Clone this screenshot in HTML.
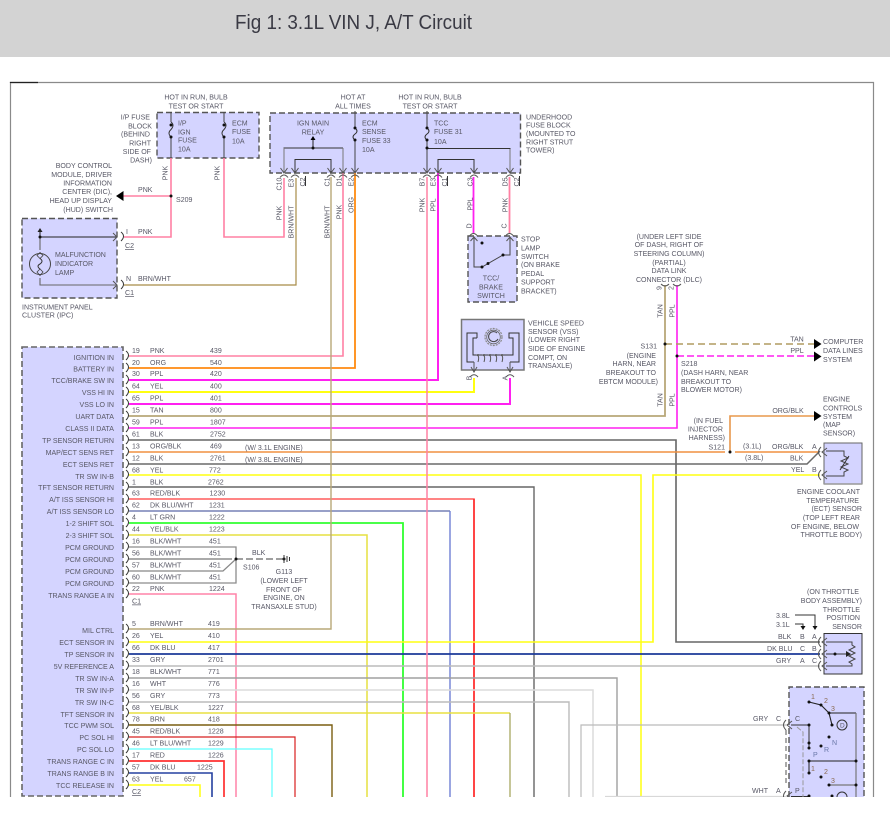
<!DOCTYPE html>
<html>
<head>
<meta charset="utf-8">
<title>Fig 1: 3.1L VIN J, A/T Circuit</title>
<style>
html,body{margin:0;padding:0;background:#fff;width:890px;height:817px;overflow:hidden}
svg{position:absolute;left:0;top:0;display:block}
text{font-family:"Liberation Sans",sans-serif;font-size:7.05px;fill:#585866}
.e{text-anchor:end}
.m{text-anchor:middle}
.u{text-decoration:underline}
.w path,.w circle{fill:none}
</style>
</head>
<body>
<svg width="890" height="797" viewBox="0 0 890 797" xmlns="http://www.w3.org/2000/svg">
<defs>
<path id="ca" d="M-4 4.5Q0 -.5 4 4.5M-3.5 -5L0 0L3.5 -5" fill="none" stroke="#555" stroke-width="1"/>
<path id="cp" d="M-2 -5Q3 -1 -2 4" fill="none" stroke="#333" stroke-width="1"/>
<path id="cl" d="M2 -5Q-3 0 2 5M8 -4L3 0L8 4" fill="none" stroke="#555" stroke-width="1"/>
<path id="ar" d="M-3 -5L0 0L3 -5" fill="none" stroke="#555" stroke-width="1"/>
<path id="tri" d="M0 -5L7.5 0L0 5Z" fill="#000"/>
<circle id="d" r="1.5" fill="#111"/>
</defs>

<!-- header -->
<rect x="0" y="0" width="890" height="57" fill="#d3d3d3"/>
<text x="235" y="29" textLength="237" lengthAdjust="spacingAndGlyphs" style="font-size:20.5px;fill:#3a3a44">Fig 1: 3.1L VIN J, A/T Circuit</text>

<!-- frame -->
<path d="M10.5 797V82.5H873.5V797" fill="none" stroke="#8a8a8a" stroke-width="1.2"/>
<path d="M10.5 83V82.5H38" fill="none" stroke="#222" stroke-width="1.2"/>

<!-- boxes -->
<g fill="#d4d4ff" stroke="#555" stroke-width="1.4" stroke-dasharray="6 3">
<rect x="157" y="112.5" width="102" height="45.5"/>
<rect x="270" y="113" width="250.5" height="60"/>
<rect x="22" y="218.5" width="95" height="79.5"/>
<rect x="468" y="236" width="49" height="66"/>
<rect x="22" y="347" width="101" height="449" stroke="#666" stroke-width="1.6"/>
<path d="M789 797V687H864V797"/>
</g>
<rect x="461.5" y="319.5" width="62.5" height="50.5" fill="#d4d4ff" stroke="#777" stroke-width="1.5"/>
<rect x="824" y="443" width="38" height="41" fill="#d4d4ff" stroke="#666" stroke-width="1"/>
<path d="M824 484H862" stroke="#999" stroke-width="1.5"/>
<rect x="824" y="633.5" width="38" height="40.5" fill="#d4d4ff" stroke="#333" stroke-width="1"/>

<!-- wires -->
<g class="w" stroke-linejoin="miter">
<path d="M129 356H343V173" stroke="#ff80a4" stroke-width="1.6"/>
<path d="M129 368H355V173" stroke="#ff8a10" stroke-width="1.8"/>
<path d="M129 380H438V173" stroke="#ff20f0" stroke-width="2"/>
<path d="M129 392H474V378" stroke="#ffff10" stroke-width="2"/>
<path d="M129 404H510V378" stroke="#ff20f0" stroke-width="2"/>
<path d="M129 416H665V285" stroke="#b8a878" stroke-width="1.8"/>
<path d="M129 428H677V285" stroke="#ff20f0" stroke-width="1.6"/>
<path d="M129 440H676V642H820" stroke="#666" stroke-width="1.6"/>
<path d="M129 452H725M735 452H818" stroke="#f09040" stroke-width="1.5"/>
<path d="M730 452V416H814" stroke="#e8984c" stroke-width="1.6"/>
<path d="M129 464H807L820 451" stroke="#6a6a6a" stroke-width="1.5"/>
<path d="M129 475H641V797" stroke="#ffff10" stroke-width="1.5"/>
<path d="M129 487H534V797" stroke="#666" stroke-width="1.4"/>
<path d="M129 499H474V797" stroke="#ff5c5c" stroke-width="1.6"/>
<path d="M474 499V797" stroke="#ff2020" stroke-width="1.4"/>
<path d="M129 511H450" stroke="#304090" stroke-width="1.1"/>
<path d="M450 511V797" stroke="#7080d4" stroke-width="1.4"/>
<path d="M129 523H403V797" stroke="#30ff30" stroke-width="1.8"/>
<path d="M129 535H367V797" stroke="#e6e040" stroke-width="1.5"/>
<path d="M129 547H236V583H129" stroke="#8c8c8c" stroke-width="1.3"/>
<path d="M129 559H232" stroke="#777" stroke-width="1.3"/>
<path d="M129 571H223L236 559" stroke="#888" stroke-width="1.2"/>
<path d="M236 559H284" stroke="#666" stroke-width="1.3" stroke-dasharray="7 3"/>
<path d="M129 594H236V797" stroke="#ff84a8" stroke-width="1.5"/>

<path d="M129 629H331V368" stroke="#b8a878" stroke-width="1.4"/>
<path d="M331 177V368" stroke="#b8a878" stroke-width="1.4"/>
<path d="M129 642H653V475H820" stroke="#ffff10" stroke-width="1.6"/>
<path d="M129 654H820" stroke="#1c3a98" stroke-width="1.7"/>
<path d="M129 666H820" stroke="#bbb" stroke-width="1.5"/>
<path d="M129 678H617V797" stroke="#a0a0a0" stroke-width="1.4"/>
<path d="M129 690H593V797" stroke="#dcdcdc" stroke-width="1.5"/>
<path d="M129 702H569V797" stroke="#bbb" stroke-width="1.4"/>
<path d="M129 713H510" stroke="#e8e040" stroke-width="1.4"/>
<path d="M510 713V797" stroke="#a8a860" stroke-width="1.3"/>
<path d="M129 725H332V797" stroke="#7a5e10" stroke-width="1.4"/>
<path d="M581 797V725H786" stroke="#bbb" stroke-width="1.2"/>
<path d="M129 737H295V797" stroke="#d82020" stroke-width="1.2"/>
<path d="M129 749H272V797" stroke="#60ffff" stroke-width="1.2"/>
<path d="M129 761H224V797" stroke="#ff3030" stroke-width="1.7"/>
<path d="M129 773H212V797" stroke="#2540a0" stroke-width="1.6"/>
<path d="M129 785H200V797" stroke="#ffff10" stroke-width="1.5"/>
<path d="M605 796.5H786" stroke="#d8d8d8" stroke-width="1.3"/>

<!-- top wires -->
<path d="M171 158V237H124" stroke="#ff80a4" stroke-width="1.6"/>
<path d="M171 196H122" stroke="#ff80a4" stroke-width="1.6"/>
<path d="M224 158V237H284V178" stroke="#ff80a4" stroke-width="1.6"/>
<path d="M124 285H296V178" stroke="#a88c48" stroke-width="1.2"/>
<path d="M427 177V797" stroke="#ff80a4" stroke-width="1.5"/>
<path d="M473.5 177V233" stroke="#ff20f0" stroke-width="1.8"/>
<path d="M509.5 177V233" stroke="#ff80a4" stroke-width="1.8"/>
<path d="M665 344H814" stroke="#b09c60" stroke-width="1.4" stroke-dasharray="7 4"/>
<path d="M677 356H814" stroke="#ff20f0" stroke-width="1.4" stroke-dasharray="7 3"/>

<!-- fuse inner -->
<path d="M171 112V122M171 137V158" stroke="#444" stroke-width="1"/>
<path d="M171 122Q175 125 171 129.500Q167 133 171 137" stroke="#333" stroke-width="1"/>
<path d="M224 112V122M224 137V158" stroke="#444" stroke-width="1"/>
<path d="M224 122Q228 125 224 129.500Q220 133 224 137" stroke="#333" stroke-width="1"/>
<path d="M355 111V128M355 140V173" stroke="#444" stroke-width="1"/>
<path d="M355 128Q359 131 355 134Q351 137 355 140" stroke="#333" stroke-width="1"/>
<path d="M427 111V128M427 140V173" stroke="#444" stroke-width="1"/>
<path d="M427 128Q431 131 427 134Q423 137 427 140" stroke="#333" stroke-width="1"/>
<path d="M284 173V148H343" stroke="#333" stroke-width="1"/>
<path d="M284 173V148M343 148V173" stroke="#777" stroke-width="1"/>
<path d="M295 173V159.500H331V173" stroke="#333" stroke-width="1"/>
<path d="M313 148V140" stroke="#222" stroke-width="1"/>
<path d="M427 148.500H510V173" stroke="#333" stroke-width="1"/>
<path d="M510 149V173" stroke="#777" stroke-width="1"/>
<path d="M438 173V159.500H474V173" stroke="#333" stroke-width="1"/>

<!-- IPC inner -->
<path d="M40 230V237" stroke="#222" stroke-width="1"/>
<path d="M40 237H116" stroke="#222" stroke-width="1"/>
<path d="M40 237V250M40 278V285H116" stroke="#666" stroke-width="1.1"/>
<circle cx="40" cy="264" r="10.500" stroke="#444" stroke-width="1"/>
<path d="M40 252.500L37 255.500L40 258.500L43 255.500ZM40 269L37 272L40 275.500L43 272Z" stroke="#444" stroke-width=".8"/>
<path d="M40 258.500Q44 261 40 264Q36 266 40 269" stroke="#333" stroke-width="1"/>

<!-- stop lamp switch -->
<path d="M474 237V267H482L503 255H510V237" stroke="#444" stroke-width="1"/>

<!-- VSS internals -->
<path d="M477 338H473V355H513V338H509V333H519V362H510M477 338V333H467V362H474" stroke="#333" stroke-width="1"/>
<circle cx="493.500" cy="337" r="8.500" stroke="#888" stroke-width="1.200" stroke-dasharray="2 1"/>
<circle cx="493.500" cy="337" r="6.800" stroke="#666" stroke-width=".8"/>
<path d="M497 333A5 5 0 1 0 498 339" stroke="#444" stroke-width="1"/>
<path d="M476 355Q480 355 478 362M482 355Q486 355 484 362M488 355Q492 355 490 362M494 355Q498 355 496 362M500 355Q504 355 502 362" stroke="#555" stroke-width="1"/>
<path d="M474 362V372M510 362V372" stroke="#555" stroke-width="1"/>

<!-- ECT sensor -->
<path d="M826 451H844V456L848 458L841 461L848 464L841 467L848 470L844 472V476H826" stroke="#444" stroke-width="1"/>
<path d="M840 470L849 456" stroke="#333" stroke-width="1"/>

<!-- TPS -->
<path d="M826 642H852V645L855 647L849 650L855 653L849 656L855 659L849 662L852 664V666H826" stroke="#444" stroke-width="1"/>
<path d="M826 654H848" stroke="#333" stroke-width="1"/>
<path d="M795 615H815V626M795 624H803V626" stroke="#333" stroke-width="1"/>

<!-- Trans range -->
<path d="M809 702L821 705L829 713L832 725" stroke="#222" stroke-width="1.100"/>
<path d="M829 713H856" stroke="#222" stroke-width="1"/>
<path d="M856 713V797" stroke="#777" stroke-width="1.200"/>
<path d="M791 725H809V748" stroke="#333" stroke-width="1"/>
<path d="M809 761H856M809 761V773" stroke="#222" stroke-width="1"/>
<path d="M829 785H856" stroke="#777" stroke-width="1.200"/>
<path d="M791 796.500H809" stroke="#333" stroke-width="1"/>
<path d="M797 727L803 732V797" stroke="#999" stroke-width="1" stroke-dasharray="5 2"/>
<path d="M786 730V785" stroke="#555" stroke-width="1" stroke-dasharray="5 3"/>
<circle cx="842" cy="725" r="5" stroke="#333" stroke-width="1"/>
<circle cx="842" cy="797" r="5" stroke="#333" stroke-width="1"/>
</g>

<!-- dots -->
<use href="#d" x="171" y="196"/><use href="#d" x="171" y="125"/><use href="#d" x="171" y="137"/>
<use href="#d" x="224" y="125"/><use href="#d" x="224" y="137"/>
<use href="#d" x="355" y="128"/><use href="#d" x="355" y="140"/>
<use href="#d" x="427" y="128"/><use href="#d" x="427" y="140"/><use href="#d" x="427" y="148"/>
<use href="#d" x="313" y="148"/>
<use href="#d" x="40" y="237"/>
<use href="#d" x="482" y="243"/><use href="#d" x="482" y="267"/><use href="#d" x="488" y="263.500"/><use href="#d" x="503" y="255"/>
<use href="#d" x="665" y="344"/><use href="#d" x="677" y="356"/>
<use href="#d" x="730" y="452"/>
<use href="#d" x="236" y="559"/>
<use href="#d" x="284" y="559"/>
<use href="#d" x="835" y="654"/>
<use href="#d" x="809" y="702"/><use href="#d" x="821" y="705"/><use href="#d" x="829" y="713"/><use href="#d" x="832" y="725"/>
<use href="#d" x="809" y="725"/><use href="#d" x="809" y="743"/><use href="#d" x="809" y="748"/>
<use href="#d" x="829" y="737"/><use href="#d" x="821" y="746"/>
<use href="#d" x="856" y="761"/><use href="#d" x="809" y="761"/><use href="#d" x="809" y="773"/><use href="#d" x="821" y="777"/>
<use href="#d" x="829" y="785"/><use href="#d" x="856" y="785"/><use href="#d" x="809" y="796"/><use href="#d" x="832" y="796"/>
<g fill="#555"><circle cx="478" cy="355" r="1"/><circle cx="484" cy="355" r="1"/><circle cx="490" cy="355" r="1"/><circle cx="496" cy="355" r="1"/><circle cx="502" cy="355" r="1"/></g>

<!-- arrows, triangles -->
<path d="M123.500 191L116 196L123.500 201Z" fill="#000"/>
<use href="#tri" x="814" y="344"/><use href="#tri" x="814" y="356.500"/><use href="#tri" x="814" y="416"/>
<path d="M313 136L310.500 140H315.500Z" fill="#000"/>
<path d="M40 228L37.500 232H42.500Z" fill="#222"/>
<path d="M815 630L812.500 626H817.500ZM803 630L800.500 626H805.500Z" fill="#111"/>
<path d="M284 555V563M287 556V562M289.500 557V561" stroke="#333" stroke-width="1" fill="none"/>
<path d="M851 654L846 651V657Z" fill="#222"/>

<!-- connector glyphs -->
<g>
<use href="#ca" x="284" y="173"/><use href="#ca" x="295" y="173"/><use href="#ca" x="331" y="173"/><use href="#ca" x="343" y="173"/><use href="#ca" x="355" y="173"/>
<use href="#ca" x="427" y="173"/><use href="#ca" x="438" y="173"/><use href="#ca" x="474" y="173"/><use href="#ca" x="510" y="173"/>
<use href="#ar" x="474" y="372"/><use href="#ar" x="510" y="372"/>
<path d="M470 377Q474 372.500 478 377M506 377Q510 372.500 514 377M469.500 236Q473.500 231 477.500 236M505.500 236Q509.500 231 513.500 236M661 284Q665 288 669 284M673 284Q677 288 681 284" fill="none" stroke="#555"/>
<path d="M470.500 241L474 237L477.500 241M506.500 241L510 237L513.500 241" fill="none" stroke="#555"/>
<use href="#cp" x="123" y="237"/><use href="#cp" x="123" y="285"/>
<path d="M113 233L117 237L113 241M113 281L117 285L113 289" fill="none" stroke="#555"/>
<use href="#cp" x="128" y="356"/><use href="#cp" x="128" y="368"/><use href="#cp" x="128" y="380"/><use href="#cp" x="128" y="392"/><use href="#cp" x="128" y="404"/><use href="#cp" x="128" y="416"/><use href="#cp" x="128" y="428"/><use href="#cp" x="128" y="440"/><use href="#cp" x="128" y="452"/><use href="#cp" x="128" y="464"/><use href="#cp" x="128" y="475"/><use href="#cp" x="128" y="487"/><use href="#cp" x="128" y="499"/><use href="#cp" x="128" y="511"/><use href="#cp" x="128" y="523"/><use href="#cp" x="128" y="535"/><use href="#cp" x="128" y="547"/><use href="#cp" x="128" y="559"/><use href="#cp" x="128" y="571"/><use href="#cp" x="128" y="583"/><use href="#cp" x="128" y="594"/>
<use href="#cp" x="128" y="629"/><use href="#cp" x="128" y="642"/><use href="#cp" x="128" y="654"/><use href="#cp" x="128" y="666"/><use href="#cp" x="128" y="678"/><use href="#cp" x="128" y="690"/><use href="#cp" x="128" y="702"/><use href="#cp" x="128" y="713"/><use href="#cp" x="128" y="725"/><use href="#cp" x="128" y="737"/><use href="#cp" x="128" y="749"/><use href="#cp" x="128" y="761"/><use href="#cp" x="128" y="773"/><use href="#cp" x="128" y="785"/>
<use href="#cl" x="819" y="452"/><use href="#cl" x="819" y="475"/>
<use href="#cl" x="819" y="642"/><use href="#cl" x="819" y="654"/><use href="#cl" x="819" y="666"/>
<use href="#cl" x="784" y="725"/><use href="#cl" x="784" y="796"/>
</g>

<!-- fine underline bars for C1/C2 rotated -->
<path d="M305.500 176V186M447.500 176V186M519.500 176V186" stroke="#333" stroke-width="1"/>

<!-- top text -->
<text x="196" y="99.500" class="m">HOT IN RUN, BULB</text>
<text x="196" y="108.500" class="m">TEST OR START</text>
<text x="150" y="119.500" class="e">I/P FUSE</text>
<text x="152" y="128.500" class="e">BLOCK</text>
<text x="150" y="136.500" class="e">(BEHIND</text>
<text x="151" y="145.500" class="e">RIGHT</text>
<text x="151" y="154" class="e">SIDE OF</text>
<text x="152" y="162.500" class="e">DASH)</text>
<text x="178" y="125.500">I/P</text>
<text x="178" y="134.500">IGN</text>
<text x="178" y="142.500">FUSE</text>
<text x="178" y="151.500">10A</text>
<text x="232" y="125.500">ECM</text>
<text x="232" y="134">FUSE</text>
<text x="232" y="143.500">10A</text>
<text x="112" y="168" class="e">BODY CONTROL</text>
<text x="112" y="177" class="e">MODULE, DRIVER</text>
<text x="112" y="185.500" class="e">INFORMATION</text>
<text x="112" y="194" class="e">CENTER (DIC),</text>
<text x="112" y="203" class="e">HEAD UP DISPLAY</text>
<text x="113" y="212" class="e">(HUD) SWITCH</text>
<text x="138" y="192">PNK</text>
<text x="176" y="202">S209</text>
<text x="126" y="234">I</text>
<text x="138" y="234">PNK</text>
<text x="125" y="248" class="u">C2</text>
<text x="126" y="281">N</text>
<text x="138" y="281">BRN/WHT</text>
<text x="125" y="295" class="u">C1</text>
<text x="55" y="257">MALFUNCTION</text>
<text x="55" y="266">INDICATOR</text>
<text x="55" y="275">LAMP</text>
<text x="22" y="309.500">INSTRUMENT PANEL</text>
<text x="22" y="317.500">CLUSTER (IPC)</text>

<text x="353" y="99.500" class="m">HOT AT</text>
<text x="353" y="108.500" class="m">ALL TIMES</text>
<text x="430" y="99.500" class="m">HOT IN RUN, BULB</text>
<text x="430" y="108.500" class="m">TEST OR START</text>
<text x="313" y="125.500" class="m">IGN MAIN</text>
<text x="313" y="134.500" class="m">RELAY</text>
<text x="362" y="125.500">ECM</text>
<text x="362" y="134">SENSE</text>
<text x="362" y="143">FUSE 33</text>
<text x="362" y="152">10A</text>
<text x="434" y="125.500">TCC</text>
<text x="434" y="134">FUSE 31</text>
<text x="434" y="144">10A</text>
<text x="526" y="119.500">UNDERHOOD</text>
<text x="526" y="127.500">FUSE BLOCK</text>
<text x="526" y="136">(MOUNTED TO</text>
<text x="526" y="144.500">RIGHT STRUT</text>
<text x="526" y="152.500">TOWER)</text>
<text x="521" y="241.500">STOP</text>
<text x="521" y="250.500">LAMP</text>
<text x="521" y="259">SWITCH</text>
<text x="521" y="267">(ON BRAKE</text>
<text x="521" y="276">PEDAL</text>
<text x="521" y="284.500">SUPPORT</text>
<text x="521" y="293.500">BRACKET)</text>
<text x="491" y="280.500" class="m">TCC/</text>
<text x="491" y="289.500" class="m">BRAKE</text>
<text x="491" y="298" class="m">SWITCH</text>

<!-- rotated -->
<g class="m">
<text class="m" transform="translate(167.500 173)rotate(-90)">PNK</text>
<text class="m" transform="translate(219.500 173)rotate(-90)">PNK</text>
<text class="m" transform="translate(281.500 184)rotate(-90)">C10</text>
<text class="m" transform="translate(293.500 183)rotate(-90)">E3</text>
<text class="m" transform="translate(305 182)rotate(-90)">C2</text>
<text class="m" transform="translate(329.500 182)rotate(-90)">C1</text>
<text class="m" transform="translate(341.500 182)rotate(-90)">D1</text>
<text class="m" transform="translate(353.500 182)rotate(-90)">E2</text>
<text class="m" transform="translate(424.500 182)rotate(-90)">B7</text>
<text class="m" transform="translate(435.500 182)rotate(-90)">E3</text>
<text class="m" transform="translate(447 182)rotate(-90)">C1</text>
<text class="m" transform="translate(472.500 182)rotate(-90)">C3</text>
<text class="m" transform="translate(507.500 182)rotate(-90)">D5</text>
<text class="m" transform="translate(519 182)rotate(-90)">C2</text>
<text class="m" transform="translate(281.500 213)rotate(-90)">PNK</text>
<text class="m" transform="translate(293.500 222)rotate(-90)">BRN/WHT</text>
<text class="m" transform="translate(329.500 222)rotate(-90)">BRN/WHT</text>
<text class="m" transform="translate(341.500 212)rotate(-90)">PNK</text>
<text class="m" transform="translate(353.500 205)rotate(-90)">ORG</text>
<text class="m" transform="translate(424.500 205)rotate(-90)">PNK</text>
<text class="m" transform="translate(435.500 205)rotate(-90)">PPL</text>
<text class="m" transform="translate(472.500 204)rotate(-90)">PPL</text>
<text class="m" transform="translate(507.500 205)rotate(-90)">PNK</text>
<text class="m" transform="translate(471.500 226)rotate(-90)">D</text>
<text class="m" transform="translate(506.500 226)rotate(-90)">C</text>
<text class="m" transform="translate(471.500 378)rotate(-90)">B</text>
<text class="m" transform="translate(507.500 378)rotate(-90)">A</text>
<text class="m" transform="translate(661.500 288)rotate(-90)">9</text>
<text class="m" transform="translate(673.500 288)rotate(-90)">2</text>
<text class="m" transform="translate(662.500 311)rotate(-90)">TAN</text>
<text class="m" transform="translate(674.500 311)rotate(-90)">PPL</text>
<text class="m" transform="translate(662.500 400)rotate(-90)">TAN</text>
<text class="m" transform="translate(674.500 400)rotate(-90)">PPL</text>
</g>

<!-- VSS & DLC -->
<text x="528" y="325.500">VEHICLE SPEED</text>
<text x="528" y="334">SENSOR (VSS)</text>
<text x="528" y="342">(LOWER RIGHT</text>
<text x="528" y="351">SIDE OF ENGINE</text>
<text x="528" y="360">COMPT, ON</text>
<text x="528" y="368">TRANSAXLE)</text>
<text x="669" y="239" class="m">(UNDER LEFT SIDE</text>
<text x="669" y="247" class="m">OF DASH, RIGHT OF</text>
<text x="669" y="256" class="m">STEERING COLUMN)</text>
<text x="669" y="265" class="m">(PARTIAL)</text>
<text x="669" y="273" class="m">DATA LINK</text>
<text x="669" y="282" class="m">CONNECTOR (DLC)</text>
<text x="657" y="348.500" class="e">S131</text>
<text x="656" y="358" class="e">(ENGINE</text>
<text x="656" y="366" class="e">HARN, NEAR</text>
<text x="656" y="375" class="e">BREAKOUT TO</text>
<text x="658" y="384" class="e">EBTCM MODULE)</text>
<text x="681" y="366">S218</text>
<text x="681" y="375">(DASH HARN, NEAR</text>
<text x="681" y="384">BREAKOUT TO</text>
<text x="681" y="392">BLOWER MOTOR)</text>
<text x="797" y="341.500" class="m">TAN</text>
<text x="797" y="353" class="m">PPL</text>
<text x="823" y="344">COMPUTER</text>
<text x="823" y="353">DATA LINES</text>
<text x="823" y="362">SYSTEM</text>
<text x="823" y="401.500">ENGINE</text>
<text x="823" y="410.500">CONTROLS</text>
<text x="823" y="419">SYSTEM</text>
<text x="823" y="427">(MAP</text>
<text x="823" y="435.500">SENSOR)</text>
<text x="788" y="413" class="m">ORG/BLK</text>
<text x="723" y="423" class="e">(IN FUEL</text>
<text x="723" y="431.500" class="e">INJECTOR</text>
<text x="725" y="440" class="e">HARNESS)</text>
<text x="725" y="449.500" class="e">S121</text>
<text x="743" y="448.500">(3.1L)</text>
<text x="745" y="460">(3.8L)</text>
<text x="772" y="449">ORG/BLK</text>
<text x="812" y="449">A</text>
<text x="790" y="460.500">BLK</text>
<text x="791" y="472">YEL</text>
<text x="812" y="472">B</text>
<text x="860" y="494" class="e">ENGINE COOLANT</text>
<text x="859" y="503" class="e">TEMPERATURE</text>
<text x="862" y="511" class="e">(ECT) SENSOR</text>
<text x="860" y="520" class="e">(TOP LEFT REAR</text>
<text x="859" y="529" class="e">OF ENGINE, BELOW</text>
<text x="862" y="537" class="e">THROTTLE BODY)</text>

<text x="859" y="594" class="e">(ON THROTTLE</text>
<text x="862" y="603" class="e">BODY ASSEMBLY)</text>
<text x="860" y="612" class="e">THROTTLE</text>
<text x="860" y="620" class="e">POSITION</text>
<text x="862" y="629" class="e">SENSOR</text>
<text x="776" y="618">3.8L</text>
<text x="776" y="627">3.1L</text>
<text x="778" y="639">BLK</text>
<text x="800" y="639">B</text>
<text x="812" y="639">A</text>
<text x="767" y="651">DK BLU</text>
<text x="800" y="651">C</text>
<text x="812" y="651">B</text>
<text x="776" y="663">GRY</text>
<text x="800" y="663">A</text>
<text x="812" y="663">C</text>
<text x="753" y="721">GRY</text>
<text x="776" y="721">C</text>
<text x="795" y="721">C</text>
<text x="752" y="793">WHT</text>
<text x="776" y="793">A</text>
<text x="795" y="793">P</text>
<g>
<text x="811" y="699" style="fill:#8a6a50">1</text><text x="824" y="703" style="fill:#8a6a50">2</text><text x="831" y="711" style="fill:#8a6a50">3</text>
<text x="840" y="727.500" style="font-size:6.500px">D</text>
<text x="832" y="745" style="fill:#6a78a8">N</text><text x="824" y="752" style="fill:#6a78a8">R</text><text x="813" y="757" style="fill:#6a78a8">P</text>
<text x="811" y="771" style="fill:#8a6a50">1</text><text x="824" y="774" style="fill:#8a6a50">2</text><text x="831" y="783" style="fill:#8a6a50">3</text>
</g>

<!-- PCM labels -->
<text x="114" y="360" class="e">IGNITION IN</text>
<text x="114" y="371.500" class="e">BATTERY IN</text>
<text x="114" y="383" class="e">TCC/BRAKE SW IN</text>
<text x="114" y="395" class="e">VSS HI IN</text>
<text x="114" y="407" class="e">VSS LO IN</text>
<text x="114" y="419" class="e">UART DATA</text>
<text x="114" y="431" class="e">CLASS II DATA</text>
<text x="114" y="443" class="e">TP SENSOR RETURN</text>
<text x="114" y="455" class="e">MAP/ECT SENS RET</text>
<text x="114" y="467" class="e">ECT SENS RET</text>
<text x="114" y="479" class="e">TR SW IN-B</text>
<text x="114" y="490" class="e">TFT SENSOR RETURN</text>
<text x="114" y="502" class="e">A/T ISS SENSOR HI</text>
<text x="114" y="514" class="e">A/T ISS SENSOR LO</text>
<text x="114" y="526" class="e">1-2 SHIFT SOL</text>
<text x="114" y="538" class="e">2-3 SHIFT SOL</text>
<text x="114" y="550" class="e">PCM GROUND</text>
<text x="114" y="562" class="e">PCM GROUND</text>
<text x="114" y="574" class="e">PCM GROUND</text>
<text x="114" y="586" class="e">PCM GROUND</text>
<text x="114" y="598" class="e">TRANS RANGE A IN</text>
<text x="114" y="633" class="e">MIL CTRL</text>
<text x="114" y="645" class="e">ECT SENSOR IN</text>
<text x="114" y="657" class="e">TP SENSOR IN</text>
<text x="114" y="669" class="e">5V REFERENCE A</text>
<text x="114" y="681" class="e">TR SW IN-A</text>
<text x="114" y="693" class="e">TR SW IN-P</text>
<text x="114" y="705" class="e">TR SW IN-C</text>
<text x="114" y="717" class="e">TFT SENSOR IN</text>
<text x="114" y="728" class="e">TCC PWM SOL</text>
<text x="114" y="740" class="e">PC SOL HI</text>
<text x="114" y="752" class="e">PC SOL LO</text>
<text x="114" y="764" class="e">TRANS RANGE C IN</text>
<text x="114" y="776" class="e">TRANS RANGE B IN</text>
<text x="114" y="788" class="e">TCC RELEASE IN</text>

<!-- wire row labels -->
<text x="132" y="353">19</text><text x="150" y="353">PNK</text><text x="210" y="353">439</text>
<text x="132" y="365">20</text><text x="150" y="365">ORG</text><text x="210" y="365">540</text>
<text x="132" y="376">30</text><text x="150" y="376">PPL</text><text x="210" y="376">420</text>
<text x="132" y="388.500">64</text><text x="150" y="388.500">YEL</text><text x="210" y="388.500">400</text>
<text x="132" y="400.500">65</text><text x="150" y="400.500">PPL</text><text x="210" y="400.500">401</text>
<text x="132" y="412.500">15</text><text x="150" y="412.500">TAN</text><text x="210" y="412.500">800</text>
<text x="132" y="424.500">59</text><text x="150" y="424.500">PPL</text><text x="210" y="424.500">1807</text>
<text x="132" y="436.500">61</text><text x="150" y="436.500">BLK</text><text x="210" y="436.500">2752</text>
<text x="132" y="448.500">13</text><text x="150" y="448.500">ORG/BLK</text><text x="210" y="448.500">469</text>
<text x="245" y="450">(W/ 3.1L ENGINE)</text>
<text x="132" y="460.500">12</text><text x="150" y="460.500">BLK</text><text x="210" y="460.500">2761</text>
<text x="245" y="462">(W/ 3.8L ENGINE)</text>
<text x="132" y="472.500">68</text><text x="150" y="472.500">YEL</text><text x="209" y="472.500">772</text>
<text x="132" y="484.500">1</text><text x="150" y="484.500">BLK</text><text x="208" y="484.500">2762</text>
<text x="132" y="495.500">63</text><text x="150" y="495.500">RED/BLK</text><text x="209.500" y="495.500">1230</text>
<text x="132" y="507.500">62</text><text x="150" y="507.500">DK BLU/WHT</text><text x="209" y="507.500">1231</text>
<text x="132" y="519.500">4</text><text x="150" y="519.500">LT GRN</text><text x="209" y="519.500">1222</text>
<text x="132" y="531.500">44</text><text x="150" y="531.500">YEL/BLK</text><text x="209" y="531.500">1223</text>
<text x="132" y="543.500">16</text><text x="150" y="543.500">BLK/WHT</text><text x="209" y="543.500">451</text>
<text x="132" y="555.500">56</text><text x="150" y="555.500">BLK/WHT</text><text x="209" y="555.500">451</text>
<text x="132" y="567.500">57</text><text x="150" y="567.500">BLK/WHT</text><text x="209" y="567.500">451</text>
<text x="132" y="579.500">60</text><text x="150" y="579.500">BLK/WHT</text><text x="209" y="579.500">451</text>
<text x="132" y="591">22</text><text x="150" y="591">PNK</text><text x="209" y="591">1224</text>
<text x="132" y="603.500" class="u">C1</text>
<text x="252" y="555">BLK</text>
<text x="243" y="569.500">S106</text>
<text x="284" y="574" class="m">G113</text>
<text x="284" y="583" class="m">(LOWER LEFT</text>
<text x="284" y="592" class="m">FRONT OF</text>
<text x="284" y="600" class="m">ENGINE, ON</text>
<text x="284" y="609" class="m">TRANSAXLE STUD)</text>

<text x="132" y="626">5</text><text x="150" y="626">BRN/WHT</text><text x="208" y="626">419</text>
<text x="132" y="638">26</text><text x="150" y="638">YEL</text><text x="208" y="638">410</text>
<text x="132" y="650">66</text><text x="150" y="650">DK BLU</text><text x="208" y="650">417</text>
<text x="132" y="662">33</text><text x="150" y="662">GRY</text><text x="208" y="662">2701</text>
<text x="132" y="674">18</text><text x="150" y="674">BLK/WHT</text><text x="208" y="674">771</text>
<text x="132" y="686">16</text><text x="150" y="686">WHT</text><text x="208" y="686">776</text>
<text x="132" y="698">56</text><text x="150" y="698">GRY</text><text x="208" y="698">773</text>
<text x="132" y="710">68</text><text x="150" y="710">YEL/BLK</text><text x="208" y="710">1227</text>
<text x="132" y="721.500">78</text><text x="150" y="721.500">BRN</text><text x="208" y="721.500">418</text>
<text x="132" y="733.500">45</text><text x="150" y="733.500">RED/BLK</text><text x="208" y="733.500">1228</text>
<text x="132" y="745.500">46</text><text x="150" y="745.500">LT BLU/WHT</text><text x="208" y="745.500">1229</text>
<text x="132" y="757.500">17</text><text x="150" y="757.500">RED</text><text x="208" y="757.500">1226</text>
<text x="132" y="769.500">57</text><text x="150" y="769.500">DK BLU</text><text x="197" y="769.500">1225</text>
<text x="132" y="781.500">63</text><text x="150" y="781.500">YEL</text><text x="184" y="781.500">657</text>
<text x="132" y="794" class="u">C2</text>
</svg>
</body>
</html>
